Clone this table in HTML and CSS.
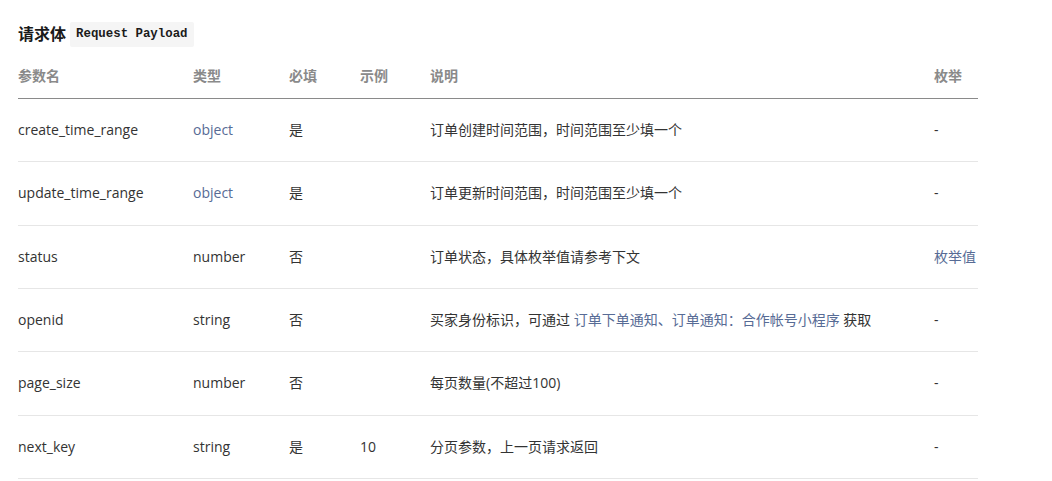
FILE: index.html
```html
<!DOCTYPE html>
<html lang="zh-CN">
<head>
<meta charset="utf-8">
<link rel="stylesheet" href="styles.css">
</head>
<body>
<div class="page">
  <h3 class="title">请求体 <code class="code">Request Payload</code></h3>
  <table class="params">
    <colgroup>
      <col class="c-name"><col class="c-type"><col class="c-req"><col class="c-ex"><col class="c-desc"><col class="c-enum">
    </colgroup>
    <thead>
      <tr><th>参数名</th><th>类型</th><th>必填</th><th>示例</th><th>说明</th><th>枚举</th></tr>
    </thead>
    <tbody>
      <tr><td>create_time_range</td><td><a class="link">object</a></td><td>是</td><td></td><td>订单创建时间范围，时间范围至少填一个</td><td>-</td></tr>
      <tr><td>update_time_range</td><td><a class="link">object</a></td><td>是</td><td></td><td>订单更新时间范围，时间范围至少填一个</td><td>-</td></tr>
      <tr><td>status</td><td>number</td><td>否</td><td></td><td>订单状态，具体枚举值请参考下文</td><td><a class="link">枚举值</a></td></tr>
      <tr><td>openid</td><td>string</td><td>否</td><td></td><td>买家身份标识，可通过 <a class="link">订单下单通知</a><a class="link">、</a><a class="link">订单通知：合作帐号小程序</a> 获取</td><td>-</td></tr>
      <tr><td>page_size</td><td>number</td><td>否</td><td></td><td>每页数量(不超过100)</td><td>-</td></tr>
      <tr><td>next_key</td><td>string</td><td>是</td><td>10</td><td>分页参数，上一页请求返回</td><td>-</td></tr>
    </tbody>
  </table>
</div>
</body>
</html>
```
FILE: styles.css
```css
html, body {
  margin: 0;
  padding: 0;
  background: #ffffff;
}
body {
  font-family: "Open Sans", "Noto Sans CJK SC", sans-serif;
  font-size: 14px;
  color: #333333;
}
.page {
  padding: 22px 18px 0 18px;
}
.title {
  margin: 0;
  font-size: 16px;
  line-height: 25px;
  font-weight: bold;
  color: #1a1a1a;
  display: flex;
  align-items: center;
  gap: 4px;
}
.code {
  font-family: "Liberation Mono", "DejaVu Sans Mono", monospace;
  font-size: 12.4px;
  line-height: 19px;
  padding: 3px 6px;
  background: #f5f5f5;
  color: #1a1a1a;
  border-radius: 2px;
  font-weight: bold;
}
.params {
  margin-top: 7px;
  width: 960px;
  border-collapse: collapse;
  table-layout: fixed;
}
.c-name { width: 175px; }
.c-type { width: 96px; }
.c-req { width: 71px; }
.c-ex { width: 70px; }
.c-desc { width: 504px; }
.c-enum { width: 44px; }
.params th {
  text-align: left;
  font-weight: bold;
  color: #8a8a8a;
  font-size: 14px;
  line-height: 22px;
  padding: 11px 0 11px 0;
  border-bottom: 1px solid #8a8a8a;
}
.params td {
  padding: 20px 0;
  line-height: 22.33px;
  border-bottom: 1px solid #e6e6e6;
  white-space: nowrap;
  vertical-align: middle;
}
.link {
  color: #576b95;
  text-decoration: none;
}
```
